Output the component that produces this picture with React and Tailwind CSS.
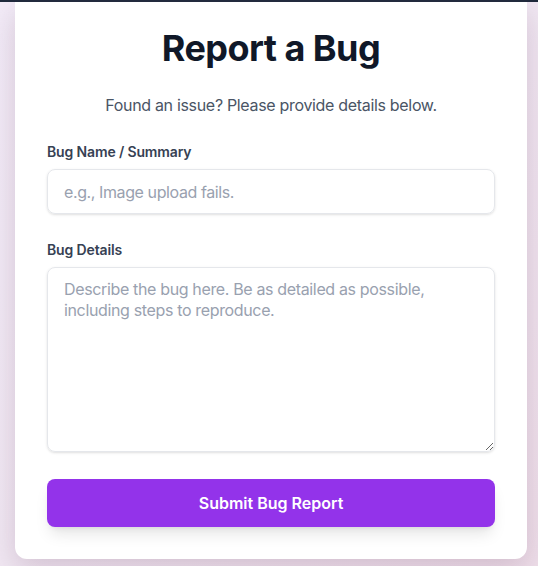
import { useState } from "react";

export default function App() {
  const [name, setName] = useState("");
  const [details, setDetails] = useState("");

  const handleSubmit = (e) => {
    e.preventDefault();
  };

  return (
    <div
      className="min-h-[566px] bg-gradient-to-br from-[#f3ecf8] via-[#f1e8f3] to-[#efdfea] flex flex-col"
      style={{ fontFamily: "Inter, 'Noto Sans', sans-serif" }}
    >
      {/* header edge */}
      <div className="h-[2px] bg-[#1e293b]" />

      <div className="pl-[15px] pr-[11px]">
        <div className="w-[512px] bg-white rounded-b-xl shadow-[0_10px_30px_rgba(120,80,110,0.25)] px-8 pt-[26px] pb-8">
          <h1 className="text-4xl font-bold text-gray-900 text-center leading-10 tracking-[-0.015em]">
            Report a Bug
          </h1>
          <p className="text-base text-gray-600 text-center mt-[25px] leading-6 tracking-[-0.02em]">
            Found an issue? Please provide details below.
          </p>

          <form onSubmit={handleSubmit} className="mt-[25px]">
            <label className="block text-sm font-semibold text-gray-700 leading-5 tracking-[-0.01em]">
              Bug Name / Summary
            </label>
            <input
              type="text"
              value={name}
              onChange={(e) => setName(e.target.value)}
              placeholder="e.g., Image upload fails."
              className="mt-[7px] block w-full h-[45px] border border-gray-200 rounded-lg px-4 text-base tracking-[-0.025em] text-gray-900 placeholder:text-gray-400 shadow-sm outline-none"
            />

            <label className="block text-sm font-semibold text-gray-700 leading-5 mt-[26px] tracking-[-0.01em]">
              Bug Details
            </label>
            <textarea
              value={details}
              onChange={(e) => setDetails(e.target.value)}
              placeholder="Describe the bug here. Be as detailed as possible, including steps to reproduce."
              className="mt-[7px] block w-full h-[185px] border border-gray-200 rounded-lg px-4 py-[11px] text-base leading-[21px] tracking-[-0.022em] text-gray-900 placeholder:text-gray-400 shadow-sm outline-none"
            />

            <button
              type="submit"
              className="mt-[27px] w-full h-12 bg-[#9333ea] text-white text-base font-semibold rounded-lg shadow-lg"
            >
              Submit Bug Report
            </button>
          </form>
        </div>
      </div>
    </div>
  );
}
